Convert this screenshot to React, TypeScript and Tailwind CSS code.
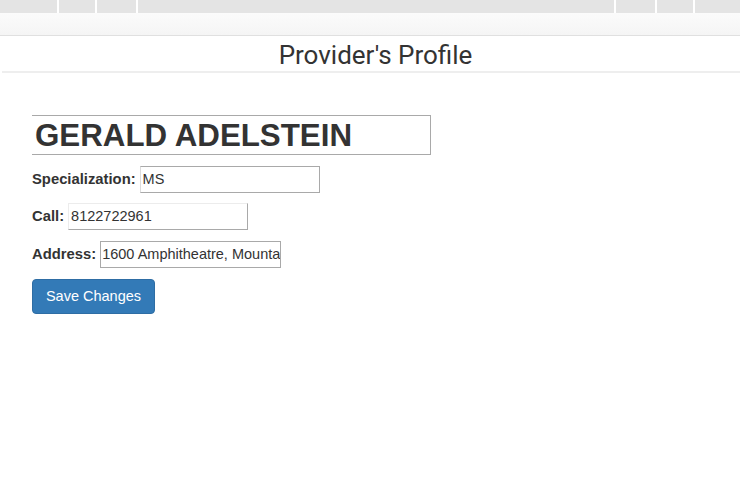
import React from "react";

export default function App() {
  const seps = [57, 95, 136, 614, 655, 693];
  return (
    <div className="w-[740px] h-[483px] bg-white overflow-hidden" style={{ fontFamily: '"Liberation Sans", Arial, sans-serif' }}>
      <div className="relative h-[13px] bg-[#e4e4e4]">
        {seps.map((x) => (
          <div key={x} className="absolute top-0 h-[13px] w-[2px] bg-white" style={{ left: x }} />
        ))}
      </div>
      <div className="h-[23px] bg-gradient-to-b from-[#fbfbfb] to-[#f5f5f5] border-b border-[#e0e0e0]" />
      <div className="ml-[2px] h-[37px] border-b-2 border-[#eeeeee] flex items-center justify-center pl-[9px]">
        <h1 className="text-[26px] text-[#333] leading-none pt-[2px]" style={{ fontFamily: 'Roboto, "Liberation Sans", sans-serif' }}>
          Provider's Profile
        </h1>
      </div>
      <div className="pl-[32px] pt-[42px] text-[#333]">
        <div className="w-[399px] h-[40px] border-t border-b border-r border-[#a9a9a9] flex items-center pl-[3px]">
          <span className="text-[31.3px] font-bold leading-none text-[#333] pt-[1px]">GERALD ADELSTEIN</span>
        </div>
        <div className="flex items-center mt-[11px] h-[27px]">
          <span className="text-[14.8px] font-bold">Specialization:</span>
          <div className="ml-[4px] w-[180px] h-[27px] border-t border-b border-r border-l border-l-[#dcdcdc] border-[#a9a9a9] flex items-center pl-[2px] text-[14.5px]">
            MS
          </div>
        </div>
        <div className="flex items-center mt-[10px] h-[27px]">
          <span className="text-[14.8px] font-bold">Call:</span>
          <div className="ml-[4px] w-[180px] h-[27px] border-b border-r border-t border-l border-t-[#ececec] border-l-[#ececec] border-[#a9a9a9] flex items-center pl-[2px] text-[14.5px]">
            8122722961
          </div>
        </div>
        <div className="flex items-center mt-[11px] h-[27px]">
          <span className="text-[14.8px] font-bold">Address:</span>
          <div className="ml-[4px] w-[181px] h-[27px] border border-[#a9a9a9] flex items-center pl-[1px] text-[14.5px] overflow-hidden whitespace-nowrap">
            1600 Amphitheatre, Mountain View, CA
          </div>
        </div>
        <button className="mt-[11px] w-[123px] h-[35px] bg-[#337ab7] border border-[#2e6da4] rounded-[4px] text-white text-[14.5px] flex items-center justify-center">
          Save Changes
        </button>
      </div>
    </div>
  );
}
